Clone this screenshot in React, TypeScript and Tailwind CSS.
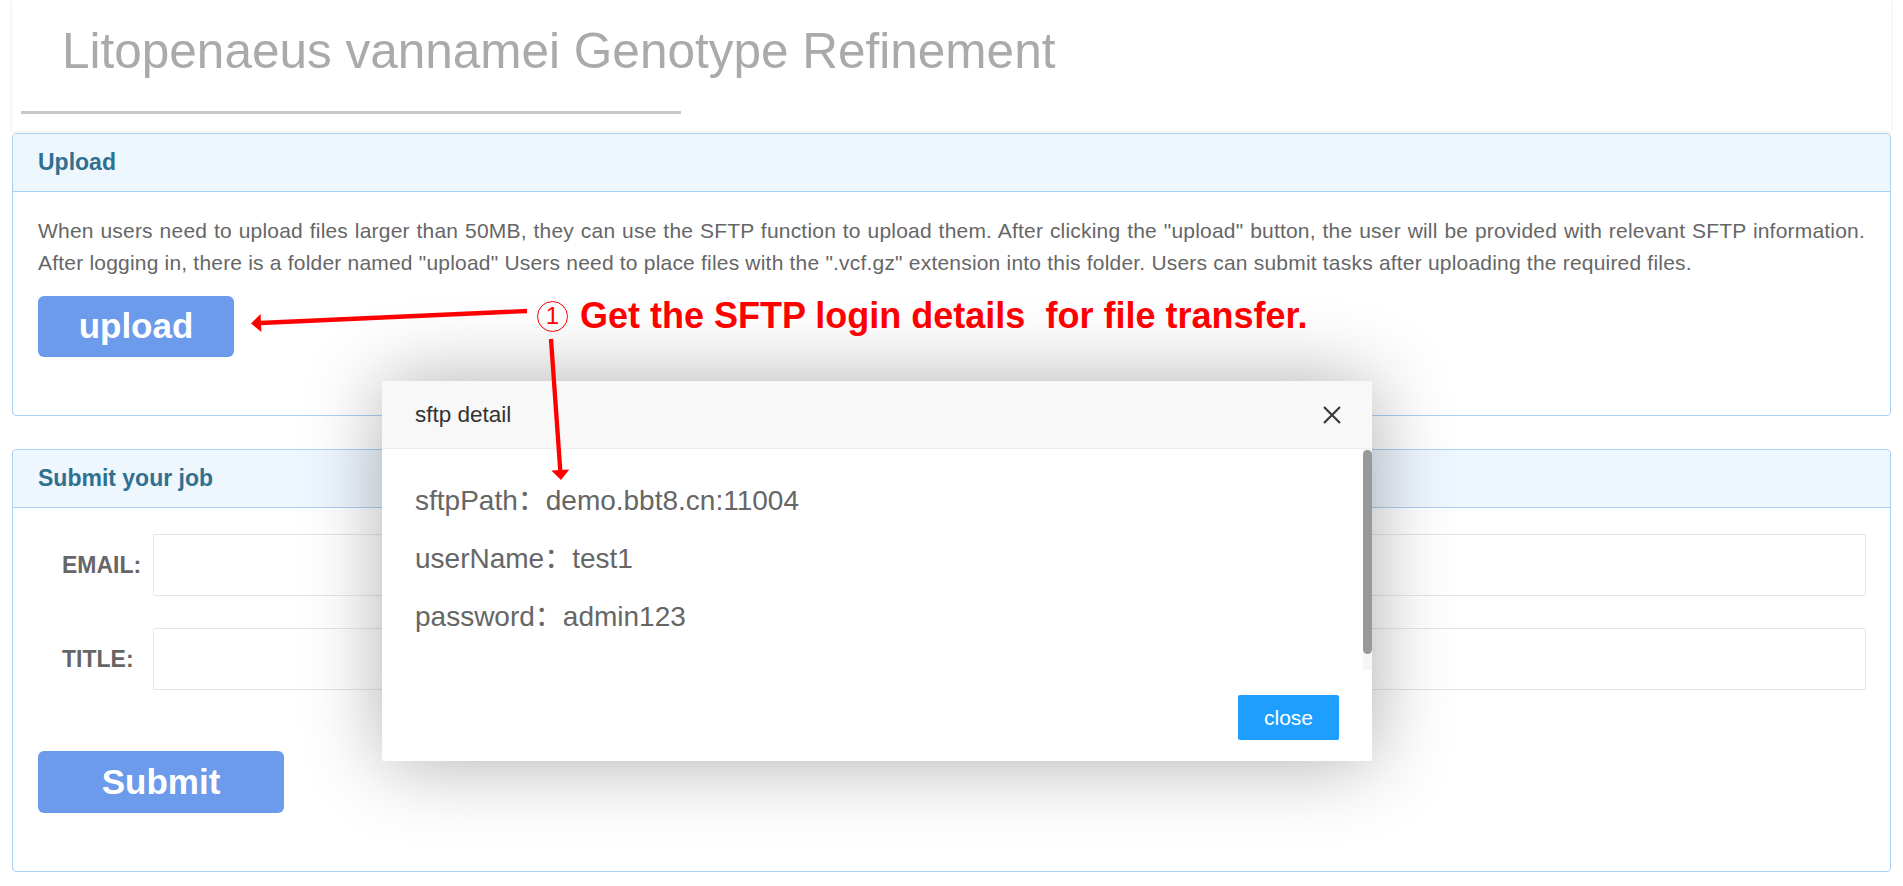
import type { ReactNode } from "react";

/** Bordered info panel with a light-blue heading strip */
function Panel({ title, className, children }: { title: string; className?: string; children: ReactNode }) {
  return (
    <section className={`rounded-[4px] border border-[#a9d0f5] bg-white ${className ?? ""}`}>
      <div className="flex h-[58px] items-center rounded-t-[4px] border-b border-[#a9d0f5] bg-[#eef6fe] pl-[25px] text-[23px] font-bold text-[#31708f]">
        {title}
      </div>
      {children}
    </section>
  );
}

function Field({ label }: { label: string }) {
  return (
    <div className="flex items-center pl-[49px] pr-[24px]">
      <label className="w-[91px] text-[23px] font-bold text-[#666]">{label}</label>
      <input type="text" className="h-[62px] flex-1 rounded-[2px] border border-[#e6e6e6] bg-white px-3 outline-none" />
    </div>
  );
}

export default function App() {
  return (
    <div className="relative min-h-[886px] overflow-hidden bg-white px-[12px] font-['Liberation_Sans',Arial,'Noto_Sans_CJK_SC',sans-serif]">
      {/* Title card */}
      <header className="flex h-[131px] flex-col bg-white shadow-[0_0_3px_rgba(0,0,0,0.12)]">
        <h1 className="pl-[50px] pt-[26px] text-[49.5px] leading-[50px] font-normal text-[#aaaaaa]">
          Litopenaeus vannamei Genotype Refinement
        </h1>
        <div className="ml-[9px] mt-[35px] h-[3px] w-[660px] bg-[#c8c8c8]" />
      </header>

      {/* Upload */}
      <Panel title="Upload" className="mt-[2px]">
        <div className="px-[25px] pb-[58px] pt-[23px]">
          <p className="text-justify text-[21px] leading-[31.5px] tracking-[0.2px] text-[#666]">
            When users need to upload files larger than 50MB, they can use the SFTP function to upload them. After
            clicking the "upload" button, the user will be provided with relevant SFTP information. After logging in,
            there is a folder named "upload" Users need to place files with the ".vcf.gz" extension into this folder.
            Users can submit tasks after uploading the required files.
          </p>
          <button
            type="button"
            className="mt-[18px] h-[61px] w-[196px] rounded-[6px] bg-[#6b9bea] text-[35px] font-bold text-white"
          >
            upload
          </button>
        </div>
      </Panel>

      {/* Submit your job */}
      <Panel title="Submit your job" className="mt-[33px]">
        <div className="flex flex-col pb-[58px] pt-[26px]">
          <Field label="EMAIL:" />
          <div className="mt-[32px]">
            <Field label="TITLE:" />
          </div>
          <div className="pl-[25px]">
            <button
              type="button"
              className="mt-[61px] h-[62px] w-[246px] rounded-[6px] bg-[#6b9bea] text-[35px] font-bold text-white"
            >
              Submit
            </button>
          </div>
        </div>
      </Panel>

      {/* sftp detail dialog */}
      <div className="absolute left-[382px] top-[381px] flex w-[990px] flex-col rounded-[2px] bg-white shadow-[1px_1px_80px_rgba(0,0,0,0.32)]">
        <div className="flex h-[68px] items-center justify-between border-b border-[#eeeeee] bg-[#f8f8f8] pl-[33px] pr-[31px]">
          <span className="text-[22.5px] text-[#333]">sftp detail</span>
          <svg width="18" height="18" viewBox="0 0 18 18" aria-hidden="true">
            <path d="M1 1 L17 17 M17 1 L1 17" stroke="#3a3a3a" strokeWidth="2.2" />
          </svg>
        </div>
        <div className="relative h-[221px] overflow-hidden">
          <div className="pb-[40px] pl-[33px] pt-[23px] text-[28px] leading-[58px] text-[#666]">
            <p>sftpPath：demo.bbt8.cn:11004</p>
            <p>userName：test1</p>
            <p>password：admin123</p>
          </div>
          {/* scrollbar */}
          <div className="absolute right-0 top-0 h-full w-[9px] bg-[#f6f6f6]">
            <div className="mt-[1px] h-[204px] w-full rounded-full bg-[#999]" />
          </div>
        </div>
        <div className="flex h-[91px] justify-end pr-[33px] pt-[25px]">
          <button type="button" className="h-[45px] w-[101px] rounded-[2px] bg-[#1e9fff] text-[21px] text-white">
            close
          </button>
        </div>
      </div>

      {/* Annotation overlay */}
      <svg className="pointer-events-none absolute left-0 top-0" width="1903" height="886" aria-hidden="true">
        <line x1="527" y1="311" x2="260" y2="323" stroke="#ff0000" strokeWidth="4.3" />
        <polygon points="251,323.5 261.4,332 260.6,314" fill="#ff0000" />
        <line x1="551" y1="339" x2="560.3" y2="471" stroke="#ff0000" strokeWidth="4.3" />
        <polygon points="561,480 569.3,469.4 551.3,470.6" fill="#ff0000" />
      </svg>
      <div className="pointer-events-none absolute left-[537px] top-[297px] flex items-center gap-[12px] text-[#ff0000]">
        <span className="flex h-[31px] w-[31px] items-center justify-center rounded-full border-[1.5px] border-[#ff0000] text-[24px] leading-none">
          1
        </span>
        <span className="text-[36px] font-bold leading-[38px]">
          Get the SFTP login details&nbsp; for file transfer.
        </span>
      </div>
    </div>
  );
}
